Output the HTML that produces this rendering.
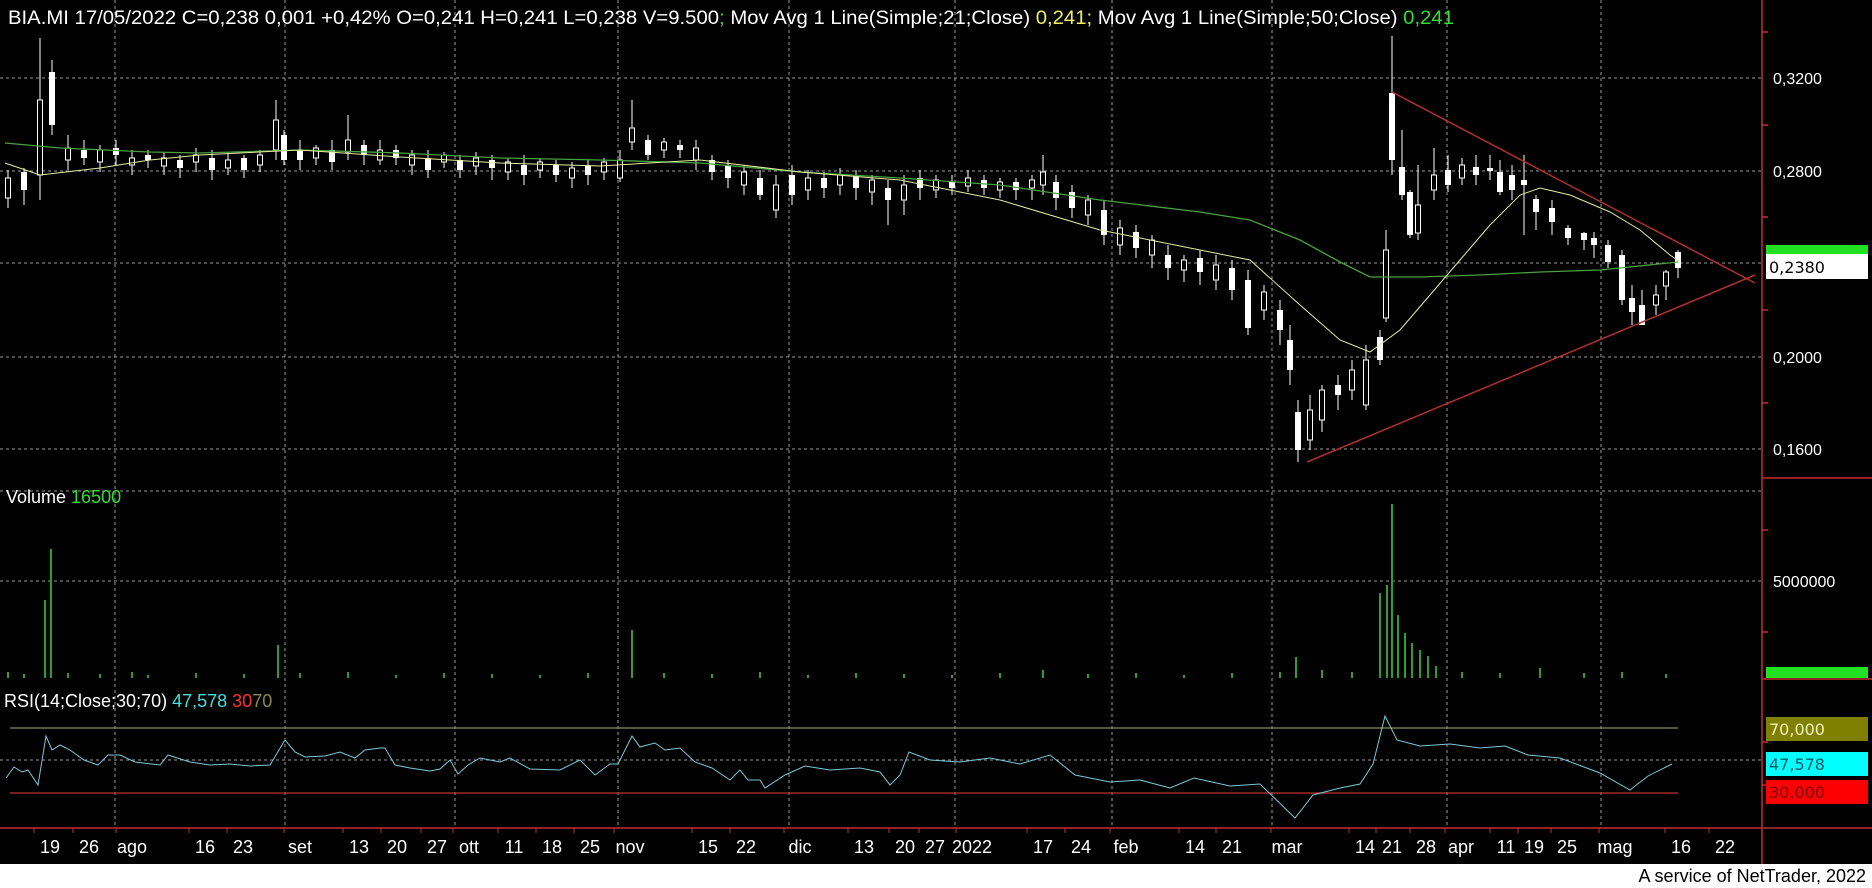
<!DOCTYPE html>
<html><head><meta charset="utf-8">
<style>
html,body{margin:0;padding:0;background:#000;width:1872px;height:888px;overflow:hidden}
svg{display:block}
text{font-family:"Liberation Sans",sans-serif}
.ax{font-family:"DejaVu Sans",sans-serif;font-size:16px}
.f{fill:#fff}
.h{fill:#000;stroke:#fff;stroke-width:1}
</style></head>
<body>
<svg width="1872" height="888" xmlns="http://www.w3.org/2000/svg">
<rect x="0" y="0" width="1872" height="888" fill="#000"/>
<g stroke="#9a9a9a" stroke-width="1" stroke-dasharray="3,3">
<line x1="0" y1="78" x2="1762" y2="78"/><line x1="0" y1="171" x2="1762" y2="171"/><line x1="0" y1="263" x2="1762" y2="263"/><line x1="0" y1="357" x2="1762" y2="357"/><line x1="0" y1="449" x2="1762" y2="449"/><line x1="0" y1="491" x2="1762" y2="491"/><line x1="0" y1="581" x2="1762" y2="581"/><line x1="0" y1="760" x2="1762" y2="760"/>
<line x1="115" y1="0" x2="115" y2="828"/><line x1="285" y1="0" x2="285" y2="828"/><line x1="455" y1="0" x2="455" y2="828"/><line x1="618" y1="0" x2="618" y2="828"/><line x1="789" y1="0" x2="789" y2="828"/><line x1="955" y1="0" x2="955" y2="828"/><line x1="1112" y1="0" x2="1112" y2="828"/><line x1="1272" y1="0" x2="1272" y2="828"/><line x1="1447" y1="0" x2="1447" y2="828"/><line x1="1601" y1="0" x2="1601" y2="828"/>
</g>
<g stroke="#c03030" stroke-width="1.5">
<line x1="1762" y1="0" x2="1762" y2="888"/>
<line x1="1762" y1="478" x2="1872" y2="478"/>
<line x1="1762" y1="679" x2="1872" y2="679"/>
<line x1="0" y1="828" x2="1872" y2="828"/>
<path d="M1762 32h6M1762 125h6M1762 217h6M1762 310h6M1762 403h6M1762 530h6M1762 632h6M1762 742h6M1762 785h6"/>
</g>
<g class="ax" fill="#fff">
<text x="1773" y="84">0,3200</text><text x="1773" y="177">0,2800</text><text x="1773" y="363">0,2000</text><text x="1773" y="455">0,1600</text><text x="1773" y="587">5000000</text>
</g>
<rect x="1766" y="245" width="102" height="10" fill="#22e022"/>
<rect x="1766" y="254" width="102" height="25" fill="#fff"/>
<text class="ax" x="1769" y="273" fill="#000">0,2380</text>
<rect x="1766" y="667" width="102" height="11" fill="#22e022"/>
<rect x="1766" y="717" width="102" height="24" fill="#808000"/>
<text class="ax" x="1769" y="735" fill="#f0f0c0">70,000</text>
<rect x="1766" y="752" width="102" height="24" fill="#00ffff"/>
<text class="ax" x="1769" y="770" fill="#005a60">47,578</text>
<rect x="1766" y="780" width="102" height="24" fill="#ff0000"/>
<text class="ax" x="1769" y="798" fill="#800000">30,000</text>

<!-- wicks -->
<path stroke="#fff" stroke-width="1" fill="none" d="M8 170V208M24 168V205M40 38V200M52 60V135M68 135V170M84 140V165M100 145V172M116 140V165M132 150V175M148 150V168M164 152V175M180 155V178M196 148V172M212 150V180M228 152V175M244 155V178M260 150V172M276 100V160M284 130V165M300 140V170M316 145V165M332 140V170M348 115V160M364 140V165M380 140V165M396 145V165M412 150V175M428 150V178M444 152V168M460 155V178M476 152V175M492 155V180M508 158V180M524 155V185M540 158V178M556 160V182M572 162V188M588 160V185M604 158V180M620 150V182M632 100V150M648 135V160M664 138V158M680 140V158M696 140V170M712 155V180M728 160V188M744 165V195M760 170V200M776 175V218M792 165V205M808 170V200M824 172V198M840 168V195M856 170V200M872 175V205M888 180V225M904 175V215M920 170V200M936 175V198M952 175V195M968 170V192M984 175V195M1000 178V198M1016 178V200M1032 175V200M1043 155V195M1056 175V210M1072 185V218M1088 195V225M1104 200V245M1120 220V255M1136 225V258M1152 235V268M1168 245V280M1184 255V282M1200 250V285M1216 255V290M1232 260V300M1248 270V335M1264 285V320M1280 300V345M1290 325V385M1298 400V462M1310 395V450M1322 385V432M1338 375V410M1352 360V400M1366 345V410M1380 330V365M1386 230V322M1392 36V175M1402 130V200M1410 190V238M1418 165V240M1434 148V200M1448 155V192M1462 158V185M1476 155V185M1490 155V180M1500 160V195M1512 165V200M1524 155V235M1536 195V230M1552 200V235M1568 225V245M1584 232V250M1594 232V258M1608 240V268M1622 250V305M1632 285V325M1642 290V325M1656 285V315M1666 270V300M1678 250V278"/>
<!-- filled bodies -->
<g class="f">
<rect x="21" y="172" width="6" height="18"/><rect x="49" y="72" width="6" height="53"/><rect x="81" y="150" width="6" height="8"/><rect x="113" y="148" width="6" height="7"/><rect x="145" y="155" width="6" height="5"/><rect x="177" y="160" width="6" height="8"/><rect x="209" y="158" width="6" height="12"/><rect x="241" y="158" width="6" height="12"/><rect x="281" y="135" width="6" height="25"/><rect x="297" y="150" width="6" height="10"/><rect x="329" y="150" width="6" height="12"/><rect x="361" y="145" width="6" height="10"/><rect x="393" y="150" width="6" height="8"/><rect x="425" y="158" width="6" height="12"/><rect x="457" y="160" width="6" height="10"/><rect x="489" y="160" width="6" height="8"/><rect x="521" y="165" width="6" height="10"/><rect x="553" y="165" width="6" height="10"/><rect x="585" y="165" width="6" height="10"/><rect x="645" y="140" width="6" height="15"/><rect x="677" y="145" width="6" height="5"/><rect x="709" y="160" width="6" height="12"/><rect x="725" y="165" width="6" height="13"/><rect x="757" y="178" width="6" height="17"/><rect x="789" y="175" width="6" height="20"/><rect x="821" y="178" width="6" height="10"/><rect x="853" y="176" width="6" height="12"/><rect x="885" y="188" width="6" height="12"/><rect x="917" y="178" width="6" height="10"/><rect x="949" y="182" width="6" height="6"/><rect x="981" y="180" width="6" height="8"/><rect x="1013" y="182" width="6" height="8"/><rect x="1053" y="182" width="6" height="16"/><rect x="1069" y="192" width="6" height="16"/><rect x="1101" y="210" width="6" height="25"/><rect x="1133" y="232" width="6" height="16"/><rect x="1165" y="255" width="6" height="13"/><rect x="1197" y="258" width="6" height="14"/><rect x="1229" y="268" width="6" height="22"/><rect x="1245" y="280" width="6" height="48"/><rect x="1277" y="310" width="6" height="20"/><rect x="1287" y="340" width="6" height="30"/><rect x="1295" y="412" width="6" height="38"/><rect x="1335" y="385" width="6" height="10"/><rect x="1377" y="337" width="6" height="23"/><rect x="1389" y="93" width="6" height="67"/><rect x="1399" y="167" width="6" height="28"/><rect x="1407" y="192" width="6" height="43"/><rect x="1445" y="170" width="6" height="15"/><rect x="1473" y="167" width="6" height="8"/><rect x="1487" y="168" width="6" height="3"/><rect x="1497" y="172" width="6" height="20"/><rect x="1509" y="175" width="6" height="15"/><rect x="1521" y="180" width="6" height="5"/><rect x="1533" y="199" width="6" height="13"/><rect x="1549" y="208" width="6" height="14"/><rect x="1565" y="228" width="6" height="10"/><rect x="1581" y="233" width="6" height="7"/><rect x="1591" y="238" width="6" height="7"/><rect x="1605" y="245" width="6" height="17"/><rect x="1619" y="255" width="6" height="45"/><rect x="1629" y="298" width="6" height="14"/><rect x="1639" y="305" width="6" height="20"/><rect x="1675" y="252" width="6" height="16"/>
</g>
<!-- hollow bodies -->
<g class="h">
<rect x="5.5" y="178" width="5" height="20"/><rect x="37.5" y="100" width="5" height="75"/><rect x="65.5" y="148" width="5" height="12"/><rect x="97.5" y="150" width="5" height="12"/><rect x="129.5" y="158" width="5" height="7"/><rect x="161.5" y="158" width="5" height="8"/><rect x="193.5" y="155" width="5" height="7"/><rect x="225.5" y="160" width="5" height="8"/><rect x="257.5" y="155" width="5" height="10"/><rect x="273.5" y="120" width="5" height="30"/><rect x="313.5" y="148" width="5" height="10"/><rect x="345.5" y="140" width="5" height="12"/><rect x="377.5" y="150" width="5" height="10"/><rect x="409.5" y="155" width="5" height="10"/><rect x="441.5" y="155" width="5" height="7"/><rect x="473.5" y="158" width="5" height="8"/><rect x="505.5" y="162" width="5" height="10"/><rect x="537.5" y="162" width="5" height="8"/><rect x="569.5" y="168" width="5" height="10"/><rect x="601.5" y="162" width="5" height="10"/><rect x="617.5" y="160" width="5" height="18"/><rect x="629.5" y="128" width="5" height="14"/><rect x="661.5" y="142" width="5" height="8"/><rect x="693.5" y="148" width="5" height="12"/><rect x="741.5" y="172" width="5" height="13"/><rect x="773.5" y="185" width="5" height="25"/><rect x="805.5" y="178" width="5" height="12"/><rect x="837.5" y="175" width="5" height="10"/><rect x="869.5" y="180" width="5" height="12"/><rect x="901.5" y="185" width="5" height="15"/><rect x="933.5" y="180" width="5" height="10"/><rect x="965.5" y="178" width="5" height="8"/><rect x="997.5" y="182" width="5" height="8"/><rect x="1029.5" y="180" width="5" height="8"/><rect x="1040.5" y="172" width="5" height="13"/><rect x="1085.5" y="200" width="5" height="15"/><rect x="1117.5" y="228" width="5" height="17"/><rect x="1149.5" y="240" width="5" height="15"/><rect x="1181.5" y="260" width="5" height="10"/><rect x="1213.5" y="265" width="5" height="15"/><rect x="1261.5" y="292" width="5" height="18"/><rect x="1307.5" y="410" width="5" height="30"/><rect x="1319.5" y="390" width="5" height="30"/><rect x="1349.5" y="370" width="5" height="20"/><rect x="1363.5" y="360" width="5" height="45"/><rect x="1383.5" y="250" width="5" height="68"/><rect x="1415.5" y="205" width="5" height="28"/><rect x="1431.5" y="175" width="5" height="15"/><rect x="1459.5" y="165" width="5" height="13"/><rect x="1653.5" y="295" width="5" height="10"/><rect x="1663.5" y="272" width="5" height="14"/>
</g>
<!-- MAs -->
<polyline fill="none" stroke="#4aa040" stroke-width="1.3" points="5,143 60,148 150,152 200,153 300,150 400,153 500,158 600,160 700,163 800,172 900,178 1000,185 1100,200 1200,212 1250,220 1300,240 1340,262 1370,277 1420,277 1480,275 1540,272 1600,270 1678,262"/>
<polyline fill="none" stroke="#e4eca0" stroke-width="1" points="5,163 40,175 100,168 150,160 200,155 300,150 400,157 500,163 600,166 700,160 800,172 900,180 1000,200 1100,230 1200,250 1250,260 1300,305 1340,340 1370,352 1400,330 1430,295 1460,260 1490,225 1520,195 1540,188 1570,195 1610,212 1640,230 1670,255 1680,262"/>
<!-- triangle -->
<line x1="1392" y1="92" x2="1755" y2="283" stroke="#b03030" stroke-width="1.5"/>
<line x1="1307" y1="462" x2="1755" y2="275" stroke="#b03030" stroke-width="1.5"/>
<!-- volume -->
<path stroke="#2e9e2e" stroke-width="2" fill="none" d="M8 678v-6M24 678v-4M45 678v-78M51 678v-129M68 678v-5M100 678v-4M132 678v-6M148 678v-3M196 678v-5M244 678v-4M278 678v-33M300 678v-5M348 678v-6M396 678v-3M444 678v-5M492 678v-4M540 678v-3M588 678v-5M632 678v-48M664 678v-5M712 678v-4M760 678v-6M808 678v-3M856 678v-5M904 678v-4M952 678v-3M1000 678v-5M1043 678v-8M1088 678v-4M1136 678v-5M1184 678v-3M1232 678v-5M1280 678v-6M1296 678v-21M1322 678v-8M1352 678v-6M1380 678v-85M1387 678v-93M1392 678v-174M1398 678v-63M1405 678v-45M1412 678v-35M1420 678v-28M1428 678v-22M1436 678v-12M1462 678v-6M1500 678v-5M1540 678v-10M1584 678v-5M1622 678v-6M1666 678v-4"/>
<!-- RSI -->
<line x1="10" y1="728" x2="1678" y2="728" stroke="#8a8a60" stroke-width="1.2"/>
<line x1="10" y1="793" x2="1678" y2="793" stroke="#c03030" stroke-width="1.2"/>
<polyline fill="none" stroke="#7cc8d8" stroke-width="1" points="6,778 14,767 22,772 28,770 38,785 46,736 52,750 60,745 70,750 84,760 98,765 108,755 120,755 135,762 160,765 168,755 190,762 210,765 230,764 250,766 270,765 285,740 295,752 305,757 325,756 340,752 355,758 365,750 380,748 385,748 395,765 410,768 430,771 440,769 450,760 458,774 468,765 480,758 500,762 510,758 530,769 560,770 580,760 595,775 610,764 618,764 632,736 640,747 655,743 665,750 680,748 695,762 712,768 730,780 740,770 748,780 760,780 765,788 785,775 805,766 830,770 860,768 880,772 890,785 900,775 909,752 930,760 960,762 990,758 1020,764 1050,755 1075,775 1110,782 1140,780 1170,788 1194,778 1230,786 1260,784 1295,818 1313,795 1340,788 1360,784 1373,764 1385,716 1397,740 1420,746 1450,744 1480,748 1505,746 1528,755 1560,758 1600,773 1630,790 1648,776 1672,764"/>
<!-- x labels -->
<g fill="#fff" font-size="18" text-anchor="middle">
<text x="50" y="853">19</text><text x="89" y="853">26</text><text x="132" y="853">ago</text><text x="205" y="853">16</text><text x="243" y="853">23</text><text x="300" y="853">set</text><text x="359" y="853">13</text><text x="397" y="853">20</text><text x="437" y="853">27</text><text x="469" y="853">ott</text><text x="514" y="853">11</text><text x="552" y="853">18</text><text x="590" y="853">25</text><text x="630" y="853">nov</text><text x="708" y="853">15</text><text x="746" y="853">22</text><text x="800" y="853">dic</text><text x="864" y="853">13</text><text x="905" y="853">20</text><text x="935" y="853">27</text><text x="972" y="853">2022</text><text x="1043" y="853">17</text><text x="1081" y="853">24</text><text x="1126" y="853">feb</text><text x="1195" y="853">14</text><text x="1232" y="853">21</text><text x="1287" y="853">mar</text><text x="1365" y="853">14</text><text x="1392" y="853">21</text><text x="1426" y="853">28</text><text x="1461" y="853">apr</text><text x="1506" y="853">11</text><text x="1534" y="853">19</text><text x="1567" y="853">25</text><text x="1615" y="853">mag</text><text x="1681" y="853">16</text><text x="1725" y="853">22</text>
</g>
<path stroke="#c03030" d="M34 828v5M73 828v5M116 828v5M189 828v5M227 828v5M284 828v5M343 828v5M381 828v5M421 828v5M453 828v5M498 828v5M536 828v5M574 828v5M614 828v5M692 828v5M730 828v5M784 828v5M848 828v5M889 828v5M919 828v5M956 828v5M1027 828v5M1065 828v5M1110 828v5M1179 828v5M1216 828v5M1271 828v5M1349 828v5M1376 828v5M1410 828v5M1445 828v5M1490 828v5M1518 828v5M1551 828v5M1599 828v5M1665 828v5M1709 828v5"/>
<!-- titles -->
<text x="8" y="24" font-size="19" fill="#fff" textLength="1446" lengthAdjust="spacingAndGlyphs">BIA.MI 17/05/2022 C=0,238 0,001 +0,42% O=0,241 H=0,241 L=0,238 V=9.500<tspan fill="#33dd33">;</tspan> Mov Avg 1 Line(Simple;21;Close) <tspan fill="#f0f060">0,241;</tspan> Mov Avg 1 Line(Simple;50;Close) <tspan fill="#33dd33">0,241</tspan></text>
<text x="6" y="503" font-size="18" fill="#fff">Volume <tspan fill="#33dd33">16500</tspan></text>
<text x="4" y="707" font-size="18" fill="#fff">RSI(14;Close;30;70) <tspan fill="#40e0e0">47,578</tspan> <tspan fill="#ff3030">30</tspan><tspan fill="#8a8a50">70</tspan></text>
<rect x="0" y="864" width="1872" height="24" fill="#fff"/>
<text x="1866" y="882" font-size="18" fill="#000" text-anchor="end">A service of NetTrader, 2022</text>
</svg>
</body></html>
